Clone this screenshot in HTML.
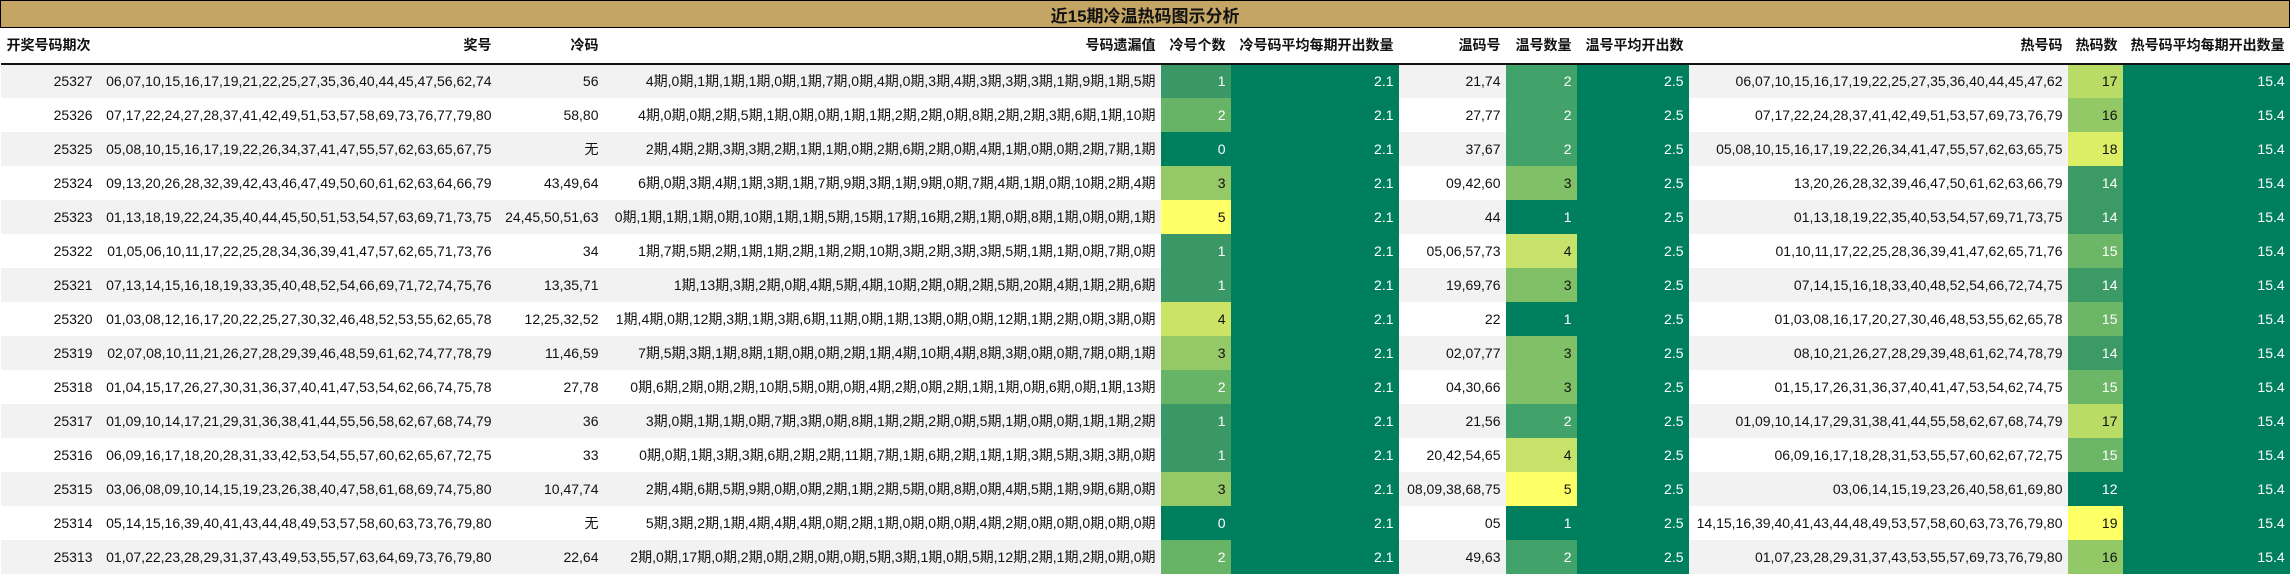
<!DOCTYPE html>
<html><head><meta charset="utf-8"><style>
*{margin:0;padding:0;box-sizing:border-box}
body{width:2292px;height:575px;background:#fff;font-family:"Liberation Sans","Noto Sans CJK SC",sans-serif;font-size:14px;color:#111;overflow:hidden}
table{border-collapse:collapse;table-layout:fixed;width:2289px}
td,th{padding:0 5px 0 0;white-space:nowrap;overflow:visible;text-align:right;font-weight:normal}
.title td{height:27px;background:#c4a564;border:1px solid #000;text-align:center;font-weight:bold;font-size:17px;padding:0}
.hd th{height:36px;font-weight:bold;border-bottom:2px solid #111;font-size:14px}
tr.r td{height:34px}
tr.g td{background:#f2f2f2}
td.d{background:#007f5f!important;color:#fff}
.c0{background:#007f5f!important;color:#fff}
.c1{background:#3a9866!important;color:#fff}
.c2{background:#68b466!important;color:#fff}
.c3{background:#95c866!important}
.c4{background:#cce466!important}
.c5{background:#ffff66!important}
.w1{background:#007f5f!important;color:#fff}
.w2{background:#41a26a!important;color:#fff}
.w3{background:#80c066!important}
.w4{background:#c6e26a!important}
.w5{background:#ffff66!important}
.h12{background:#007f5f!important;color:#fff}
.h14{background:#3c9a66!important;color:#fff}
.h15{background:#6cb668!important;color:#fff}
.h16{background:#93c866!important}
.h17{background:#b9dc66!important}
.h18{background:#dcee66!important}
.h19{background:#ffff66!important}
</style></head><body>
<table>
<colgroup><col style="width:97px"><col style="width:399px"><col style="width:107px"><col style="width:557px"><col style="width:70px"><col style="width:168px"><col style="width:107px"><col style="width:71px"><col style="width:112px"><col style="width:379px"><col style="width:55px"><col style="width:167px"></colgroup>
<tr class="title"><td colspan="12">近15期冷温热码图示分析</td></tr>
<tr class="hd"><th style="text-align:left;padding-left:6px">开奖号码期次</th><th>奖号</th><th>冷码</th><th>号码遗漏值</th><th>冷号个数</th><th>冷号码平均每期开出数量</th><th>温码号</th><th>温号数量</th><th>温号平均开出数</th><th>热号码</th><th>热码数</th><th>热号码平均每期开出数量</th></tr>
<tr class="r g"><td>25327</td><td>06,07,10,15,16,17,19,21,22,25,27,35,36,40,44,45,47,56,62,74</td><td>56</td><td>4期,0期,1期,1期,1期,0期,1期,7期,0期,4期,0期,3期,4期,3期,3期,3期,1期,9期,1期,5期</td><td class="c1">1</td><td class="d">2.1</td><td>21,74</td><td class="w2">2</td><td class="d">2.5</td><td>06,07,10,15,16,17,19,22,25,27,35,36,40,44,45,47,62</td><td class="h17">17</td><td class="d">15.4</td></tr>
<tr class="r"><td>25326</td><td>07,17,22,24,27,28,37,41,42,49,51,53,57,58,69,73,76,77,79,80</td><td>58,80</td><td>4期,0期,0期,2期,5期,1期,0期,0期,1期,1期,2期,2期,0期,8期,2期,2期,3期,6期,1期,10期</td><td class="c2">2</td><td class="d">2.1</td><td>27,77</td><td class="w2">2</td><td class="d">2.5</td><td>07,17,22,24,28,37,41,42,49,51,53,57,69,73,76,79</td><td class="h16">16</td><td class="d">15.4</td></tr>
<tr class="r g"><td>25325</td><td>05,08,10,15,16,17,19,22,26,34,37,41,47,55,57,62,63,65,67,75</td><td>无</td><td>2期,4期,2期,3期,3期,2期,1期,1期,0期,2期,6期,2期,0期,4期,1期,0期,0期,2期,7期,1期</td><td class="c0">0</td><td class="d">2.1</td><td>37,67</td><td class="w2">2</td><td class="d">2.5</td><td>05,08,10,15,16,17,19,22,26,34,41,47,55,57,62,63,65,75</td><td class="h18">18</td><td class="d">15.4</td></tr>
<tr class="r"><td>25324</td><td>09,13,20,26,28,32,39,42,43,46,47,49,50,60,61,62,63,64,66,79</td><td>43,49,64</td><td>6期,0期,3期,4期,1期,3期,1期,7期,9期,3期,1期,9期,0期,7期,4期,1期,0期,10期,2期,4期</td><td class="c3">3</td><td class="d">2.1</td><td>09,42,60</td><td class="w3">3</td><td class="d">2.5</td><td>13,20,26,28,32,39,46,47,50,61,62,63,66,79</td><td class="h14">14</td><td class="d">15.4</td></tr>
<tr class="r g"><td>25323</td><td>01,13,18,19,22,24,35,40,44,45,50,51,53,54,57,63,69,71,73,75</td><td>24,45,50,51,63</td><td>0期,1期,1期,1期,0期,10期,1期,1期,5期,15期,17期,16期,2期,1期,0期,8期,1期,0期,0期,1期</td><td class="c5">5</td><td class="d">2.1</td><td>44</td><td class="w1">1</td><td class="d">2.5</td><td>01,13,18,19,22,35,40,53,54,57,69,71,73,75</td><td class="h14">14</td><td class="d">15.4</td></tr>
<tr class="r"><td>25322</td><td>01,05,06,10,11,17,22,25,28,34,36,39,41,47,57,62,65,71,73,76</td><td>34</td><td>1期,7期,5期,2期,1期,1期,2期,1期,2期,10期,3期,2期,3期,3期,5期,1期,1期,0期,7期,0期</td><td class="c1">1</td><td class="d">2.1</td><td>05,06,57,73</td><td class="w4">4</td><td class="d">2.5</td><td>01,10,11,17,22,25,28,36,39,41,47,62,65,71,76</td><td class="h15">15</td><td class="d">15.4</td></tr>
<tr class="r g"><td>25321</td><td>07,13,14,15,16,18,19,33,35,40,48,52,54,66,69,71,72,74,75,76</td><td>13,35,71</td><td>1期,13期,3期,2期,0期,4期,5期,4期,10期,2期,0期,2期,5期,20期,4期,1期,2期,6期</td><td class="c1">1</td><td class="d">2.1</td><td>19,69,76</td><td class="w3">3</td><td class="d">2.5</td><td>07,14,15,16,18,33,40,48,52,54,66,72,74,75</td><td class="h14">14</td><td class="d">15.4</td></tr>
<tr class="r"><td>25320</td><td>01,03,08,12,16,17,20,22,25,27,30,32,46,48,52,53,55,62,65,78</td><td>12,25,32,52</td><td>1期,4期,0期,12期,3期,1期,3期,6期,11期,0期,1期,13期,0期,0期,12期,1期,2期,0期,3期,0期</td><td class="c4">4</td><td class="d">2.1</td><td>22</td><td class="w1">1</td><td class="d">2.5</td><td>01,03,08,16,17,20,27,30,46,48,53,55,62,65,78</td><td class="h15">15</td><td class="d">15.4</td></tr>
<tr class="r g"><td>25319</td><td>02,07,08,10,11,21,26,27,28,29,39,46,48,59,61,62,74,77,78,79</td><td>11,46,59</td><td>7期,5期,3期,1期,8期,1期,0期,0期,2期,1期,4期,10期,4期,8期,3期,0期,0期,7期,0期,1期</td><td class="c3">3</td><td class="d">2.1</td><td>02,07,77</td><td class="w3">3</td><td class="d">2.5</td><td>08,10,21,26,27,28,29,39,48,61,62,74,78,79</td><td class="h14">14</td><td class="d">15.4</td></tr>
<tr class="r"><td>25318</td><td>01,04,15,17,26,27,30,31,36,37,40,41,47,53,54,62,66,74,75,78</td><td>27,78</td><td>0期,6期,2期,0期,2期,10期,5期,0期,0期,4期,2期,0期,2期,1期,1期,0期,6期,0期,1期,13期</td><td class="c2">2</td><td class="d">2.1</td><td>04,30,66</td><td class="w3">3</td><td class="d">2.5</td><td>01,15,17,26,31,36,37,40,41,47,53,54,62,74,75</td><td class="h15">15</td><td class="d">15.4</td></tr>
<tr class="r g"><td>25317</td><td>01,09,10,14,17,21,29,31,36,38,41,44,55,56,58,62,67,68,74,79</td><td>36</td><td>3期,0期,1期,1期,0期,7期,3期,0期,8期,1期,2期,2期,0期,5期,1期,0期,0期,1期,1期,2期</td><td class="c1">1</td><td class="d">2.1</td><td>21,56</td><td class="w2">2</td><td class="d">2.5</td><td>01,09,10,14,17,29,31,38,41,44,55,58,62,67,68,74,79</td><td class="h17">17</td><td class="d">15.4</td></tr>
<tr class="r"><td>25316</td><td>06,09,16,17,18,20,28,31,33,42,53,54,55,57,60,62,65,67,72,75</td><td>33</td><td>0期,0期,1期,3期,3期,6期,2期,2期,11期,7期,1期,6期,2期,1期,1期,3期,5期,3期,3期,0期</td><td class="c1">1</td><td class="d">2.1</td><td>20,42,54,65</td><td class="w4">4</td><td class="d">2.5</td><td>06,09,16,17,18,28,31,53,55,57,60,62,67,72,75</td><td class="h15">15</td><td class="d">15.4</td></tr>
<tr class="r g"><td>25315</td><td>03,06,08,09,10,14,15,19,23,26,38,40,47,58,61,68,69,74,75,80</td><td>10,47,74</td><td>2期,4期,6期,5期,9期,0期,0期,2期,1期,2期,5期,0期,8期,0期,4期,5期,1期,9期,6期,0期</td><td class="c3">3</td><td class="d">2.1</td><td>08,09,38,68,75</td><td class="w5">5</td><td class="d">2.5</td><td>03,06,14,15,19,23,26,40,58,61,69,80</td><td class="h12">12</td><td class="d">15.4</td></tr>
<tr class="r"><td>25314</td><td>05,14,15,16,39,40,41,43,44,48,49,53,57,58,60,63,73,76,79,80</td><td>无</td><td>5期,3期,2期,1期,4期,4期,4期,0期,2期,1期,0期,0期,0期,4期,2期,0期,0期,0期,0期,0期</td><td class="c0">0</td><td class="d">2.1</td><td>05</td><td class="w1">1</td><td class="d">2.5</td><td>14,15,16,39,40,41,43,44,48,49,53,57,58,60,63,73,76,79,80</td><td class="h19">19</td><td class="d">15.4</td></tr>
<tr class="r g"><td>25313</td><td>01,07,22,23,28,29,31,37,43,49,53,55,57,63,64,69,73,76,79,80</td><td>22,64</td><td>2期,0期,17期,0期,2期,0期,2期,0期,0期,5期,3期,1期,0期,5期,12期,2期,1期,2期,0期,0期</td><td class="c2">2</td><td class="d">2.1</td><td>49,63</td><td class="w2">2</td><td class="d">2.5</td><td>01,07,23,28,29,31,37,43,53,55,57,69,73,76,79,80</td><td class="h16">16</td><td class="d">15.4</td></tr>
</table>
</body></html>
